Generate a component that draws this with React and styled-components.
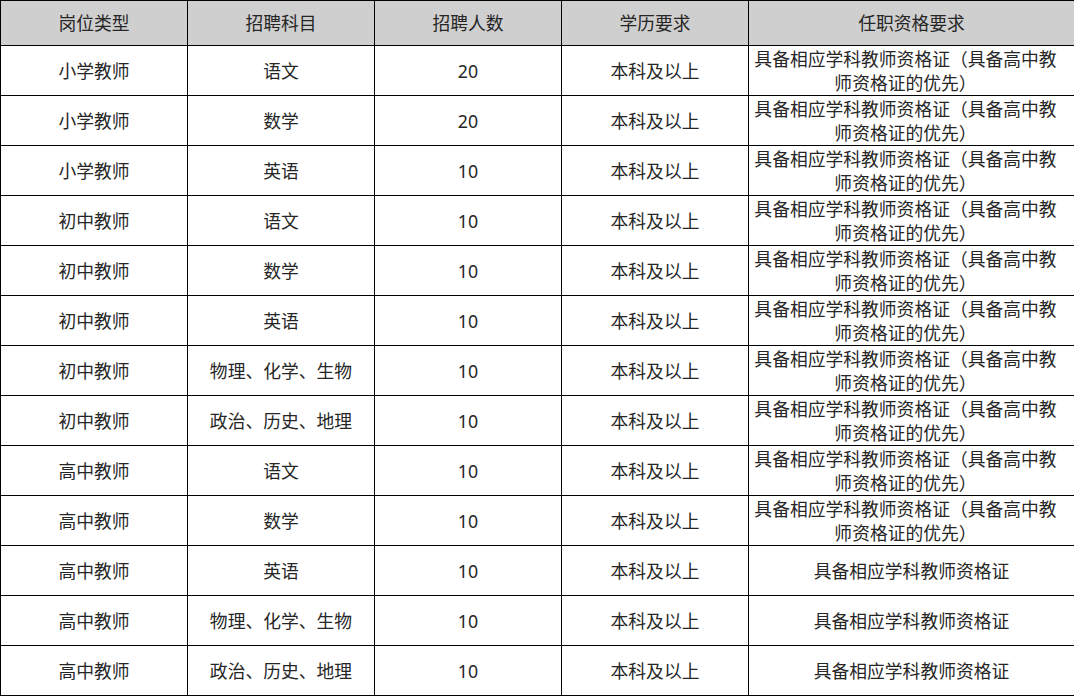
import styled, { createGlobalStyle } from "styled-components"

const Global = createGlobalStyle`
  html, body { margin: 0; padding: 0; background: #fff; }
  body { font-family: "Noto Sans", "Noto Sans CJK SC", sans-serif; }
`

const rows = [
  ["小学教师", "语文", "20", "本科及以上", true],
  ["小学教师", "数学", "20", "本科及以上", true],
  ["小学教师", "英语", "10", "本科及以上", true],
  ["初中教师", "语文", "10", "本科及以上", true],
  ["初中教师", "数学", "10", "本科及以上", true],
  ["初中教师", "英语", "10", "本科及以上", true],
  ["初中教师", "物理、化学、生物", "10", "本科及以上", true],
  ["初中教师", "政治、历史、地理", "10", "本科及以上", true],
  ["高中教师", "语文", "10", "本科及以上", true],
  ["高中教师", "数学", "10", "本科及以上", true],
  ["高中教师", "英语", "10", "本科及以上", false],
  ["高中教师", "物理、化学、生物", "10", "本科及以上", false],
  ["高中教师", "政治、历史、地理", "10", "本科及以上", false],
]

const headers = ["岗位类型", "招聘科目", "招聘人数", "学历要求", "任职资格要求"]
const widths = [187, 187, 187, 187, 326]

const App = () => {
  return (
    <Wrap>
      <Global />
      <Table>
        <colgroup>
          {widths.map((w, i) => <col key={i} style={{ width: w }} />)}
        </colgroup>
        <thead>
          <tr>
            {headers.map(h => <Th key={h}>{h}</Th>)}
          </tr>
        </thead>
        <tbody>
          {rows.map((r, i) => (
            <Row key={i}>
              <Td>{r[0]}</Td>
              <Td>{r[1]}</Td>
              <Td>{r[2]}</Td>
              <Td>{r[3]}</Td>
              <Td $long={r[4]}>
                {r[4] ? "具备相应学科教师资格证（具备高中教师资格证的优先）" : "具备相应学科教师资格证"}
              </Td>
            </Row>
          ))}
        </tbody>
      </Table>
    </Wrap>
  )
}

const Wrap = styled.div`
  width: 1074px;
  height: 696px;
  overflow: hidden;
`

const Table = styled.table`
  width: 1074px;
  table-layout: fixed;
  border-collapse: collapse;
  border: 1px solid #000;
  color: #262626;
  font-size: 17.8px;
`

const Th = styled.th`
  height: 44px;
  padding: 0;
  background: #d0cfcf;
  border: 1px solid #000;
  font-weight: 400;
  text-align: center;
  vertical-align: middle;
  line-height: 24px;
`

const Row = styled.tr`
  height: 50px;
`

const Td = styled.td`
  height: 49px;
  padding: ${p => (p.$long ? "0 14px 0 2px" : "0 4px")};
  border: 1px solid #000;
  text-align: center;
  vertical-align: middle;
  line-height: 24px;
  box-sizing: border-box;
`

export default App
